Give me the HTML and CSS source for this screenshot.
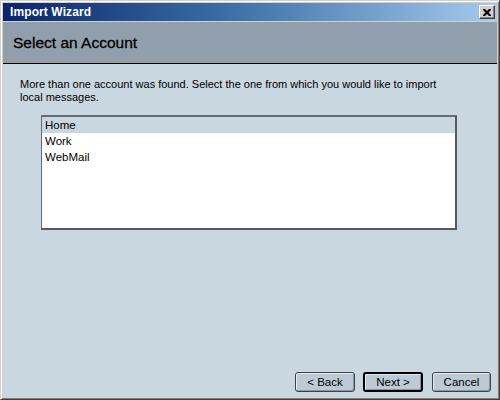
FILE: index.html
```html
<!DOCTYPE html>
<html>
<head>
<meta charset="utf-8">
<link rel="stylesheet" href="styles.css">
</head>
<body>
<div class="window">
  <div class="titlebar">
    <span class="title">Import Wizard</span>
    <span class="close"><svg width="8" height="7" viewBox="0 0 8 7"><path d="M0 0h2l2 2 2-2h2v1l-2.5 2.5L8 6v1H6L4 5 2 7H0V6l2.5-2.5L0 1z" fill="#000"/></svg></span>
  </div>
  <div class="header">Select an Account</div>
  <div class="content">
    <p class="intro">More than one account was found. Select the one from which you would like to import local messages.</p>
    <div class="listbox">
      <div class="item selected">Home</div>
      <div class="item">Work</div>
      <div class="item">WebMail</div>
    </div>
    <div class="spacer"></div>
    <div class="buttons">
      <button class="btn">&lt; Back</button>
      <button class="btn default">Next &gt;</button>
      <button class="btn cancel">Cancel</button>
    </div>
  </div>
</div>
</body>
</html>
```
FILE: styles.css
```css
html, body {
  margin: 0;
  padding: 0;
  width: 500px;
  height: 400px;
  overflow: hidden;
  background: #d4d0c8;
}
.window {
  box-sizing: border-box;
  width: 500px;
  height: 400px;
  display: flex;
  flex-direction: column;
  border-style: solid;
  border-width: 1px;
  border-color: #d4d0c8 #404040 #404040 #d4d0c8;
  box-shadow: inset 1px 1px 0 #ffffff, inset -1px -1px 0 #808080;
  padding: 2px 2px 2px 2px;
  background: #d4d0c8;
  font-family: "Liberation Sans", Arial, sans-serif;
}
.titlebar {
  height: 18px;
  display: flex;
  align-items: center;
  justify-content: space-between;
  background: linear-gradient(to right, #0a246a 0%, #3a6ea5 45%, #a6caf0 100%);
  padding: 0 2px 0 7px;
}
.title {
  color: #ffffff;
  font-weight: bold;
  font-size: 12px;
  letter-spacing: 0.1px;
}
.close {
  box-sizing: border-box;
  width: 16px;
  height: 14px;
  background: #d4d0c8;
  border-style: solid;
  border-width: 1px;
  border-color: #ffffff #404040 #404040 #ffffff;
  box-shadow: inset -1px -1px 0 #808080;
  display: flex;
  align-items: center;
  justify-content: center;
}
.header {
  margin-top: 1px;
  height: 41px;
  background: #919fac;
  border-bottom: 1px solid #000000;
  box-shadow: 0 1px 0 #e3ebf0;
  font-size: 15.5px;
  color: #000;
  padding-left: 10px;
  line-height: 41px;
  -webkit-text-stroke: 0.3px #000;
}
.content {
  flex: 1;
  background: #c9d7e0;
  display: flex;
  flex-direction: column;
  padding: 14px 6px 5px 17px;
}
.intro {
  margin: 0;
  font-size: 11px;
  line-height: 13px;
  color: #000;
  width: 420px;
}
.listbox {
  margin: 11px 0 0 21px;
  width: 416px;
  height: 115px;
  box-sizing: border-box;
  background: #ffffff;
  border-style: solid;
  border-width: 2px 2px 2px 1px;
  border-color: #666c74 #555a61 #555a61 #666c74;
}
.item {
  height: 16px;
  line-height: 16px;
  padding-left: 3px;
  font-size: 11.5px;
  color: #000;
}
.item.selected {
  background: #c9d7e0;
}
.spacer {
  flex: 1;
}
.buttons {
  display: flex;
  justify-content: flex-end;
  gap: 8px;
}
.btn {
  box-sizing: border-box;
  height: 20px;
  width: 60px;
  background: #bccad5;
  border: 1px solid #404040;
  border-radius: 3px;
  box-shadow: inset 1px 1px 0 #e6eef3, inset -1px -1px 0 #8a97a2;
  font-family: "Liberation Sans", Arial, sans-serif;
  font-size: 11.5px;
  color: #000;
  padding: 0;
}
.btn.default {
  border: 2px solid #000;
}
.btn.cancel {
  width: 59px;
  margin-left: 1px;
}
```
